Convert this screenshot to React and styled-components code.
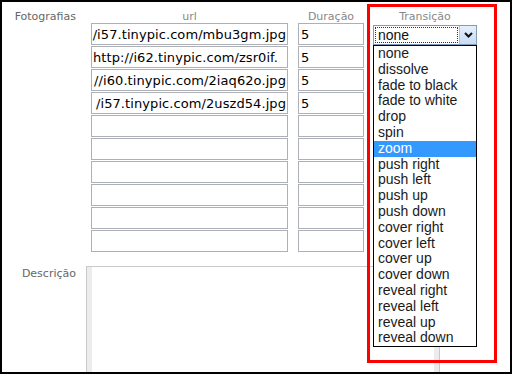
import React from "react";
import styled, { createGlobalStyle } from "styled-components";

const GlobalStyle = createGlobalStyle`
  body {
    margin: 0;
    background: #fff;
  }
`;

const Frame = styled.div`
  position: relative;
  width: 512px;
  height: 374px;
  box-sizing: border-box;
  border: 2px solid #000;
  overflow: hidden;
  background: #fff;
  font-family: "DejaVu Sans", Verdana, sans-serif;
`;

const Row = styled.div`
  display: flex;
  align-items: flex-start;
  margin-top: ${(p) => p.$mt || 0}px;
`;

const Label = styled.div`
  flex-shrink: 0;
  width: 74px;
  padding-top: ${(p) => p.$top}px;
  text-align: right;
  font-size: 11px;
  line-height: 13px;
  color: #666;
`;

const Column = styled.div`
  position: relative;
  display: flex;
  flex-direction: column;
  flex-shrink: 0;
  width: ${(p) => p.$w}px;
  margin-left: ${(p) => p.$ml}px;
`;

const Header = styled.div`
  height: 13px;
  padding-top: 8px;
  text-align: center;
  font-size: 11px;
  line-height: 13px;
  color: #888;
`;

const Field = styled.div`
  box-sizing: border-box;
  display: flex;
  align-items: center;
  justify-content: ${(p) => (p.$end ? "flex-end" : "flex-start")};
  height: 22px;
  margin-bottom: 1px;
  padding: 0 ${(p) => p.$pad}px;
  border: 1px solid #aeb0b7;
  overflow: hidden;
  white-space: nowrap;
  font-size: 13px;
  letter-spacing: 0.08px;
  color: #000;

  span {
    flex-shrink: 0;
  }
`;

const Select = styled.div`
  display: flex;
  height: 20px;
  margin-top: 2px;
  box-sizing: border-box;
  border: 1px solid #7f9db9;
  font-family: "Liberation Sans", Arial, sans-serif;
`;

const SelectValue = styled.div`
  flex: 1;
  margin: 1px;
  padding-left: 2px;
  border: 1px dotted #333;
  font-size: 14px;
  line-height: 14px;
  color: #111;
`;

const SelectButton = styled.div`
  display: flex;
  align-items: center;
  justify-content: center;
  width: 16px;
  border-left: 1px solid #a9c2e8;
  background: linear-gradient(#e6effc, #c8dbf6);
`;

const OptionList = styled.ul`
  position: absolute;
  top: 43px;
  left: 0;
  z-index: 3;
  width: 104px;
  box-sizing: border-box;
  margin: 0;
  padding: 0;
  list-style: none;
  border: 1px solid #000;
  background: #fff;
  font-family: "Liberation Sans", Arial, sans-serif;
`;

const Option = styled.li`
  height: 15.8px;
  padding-left: 4px;
  font-size: 14px;
  line-height: 15.8px;
  white-space: nowrap;
  color: ${(p) => (p.$active ? "#fff" : "#1a1a1a")};
  background: ${(p) => (p.$active ? "#3399ff" : "transparent")};
`;

const TextArea = styled.div`
  flex-shrink: 0;
  width: 354px;
  height: 120px;
  margin-left: 10px;
  box-sizing: border-box;
  border: 1px solid #c9c9c9;
  box-shadow: inset 5px 0 0 #ececec, inset -5px 0 0 #ececec;
`;

const Annotation = styled.div`
  position: absolute;
  left: 365px;
  top: 2px;
  z-index: 4;
  width: 130px;
  height: 359px;
  box-sizing: border-box;
  border: 3px solid #f00;
  pointer-events: none;
`;

const urls = [
  { text: "/i57.tinypic.com/mbu3gm.jpg", end: true },
  { text: "http://i62.tinypic.com/zsr0if.", end: false },
  { text: "//i60.tinypic.com/2iaq62o.jpg", end: true },
  { text: "/i57.tinypic.com/2uszd54.jpg", end: true },
  { text: "" },
  { text: "" },
  { text: "" },
  { text: "" },
  { text: "" },
  { text: "" },
];

const transitions = [
  "none",
  "dissolve",
  "fade to black",
  "fade to white",
  "drop",
  "spin",
  "zoom",
  "push right",
  "push left",
  "push up",
  "push down",
  "cover right",
  "cover left",
  "cover up",
  "cover down",
  "reveal right",
  "reveal left",
  "reveal up",
  "reveal down",
];

const App = () => {
  return (
    <>
      <GlobalStyle />
      <Frame>
        <Row>
          <Label $top={8}>Fotografias</Label>
          <Column $w={197} $ml={15}>
            <Header>url</Header>
            {urls.map((u, i) => (
              <Field key={i} $end={u.end} $pad={1}>
                <span>{u.text}</span>
              </Field>
            ))}
          </Column>
          <Column $w={66} $ml={10}>
            <Header>Duração</Header>
            {urls.map((u, i) => (
              <Field key={i} $pad={2}>
                <span>{u.text ? "5" : ""}</span>
              </Field>
            ))}
          </Column>
          <Column $w={104} $ml={9}>
            <Header>Transição</Header>
            <Select>
              <SelectValue>none</SelectValue>
              <SelectButton>
                <svg width="9" height="6" viewBox="0 0 9 6">
                  <path d="M1 1 L4.5 4.5 L8 1" fill="none" stroke="#111" strokeWidth="2" />
                </svg>
              </SelectButton>
            </Select>
            <OptionList>
              {transitions.map((t) => (
                <Option key={t} $active={t === "zoom"}>
                  {t}
                </Option>
              ))}
            </OptionList>
          </Column>
        </Row>
        <Row $mt={13}>
          <Label $top={1}>Descrição</Label>
          <TextArea />
        </Row>
        <Annotation />
      </Frame>
    </>
  );
};

export default App;
